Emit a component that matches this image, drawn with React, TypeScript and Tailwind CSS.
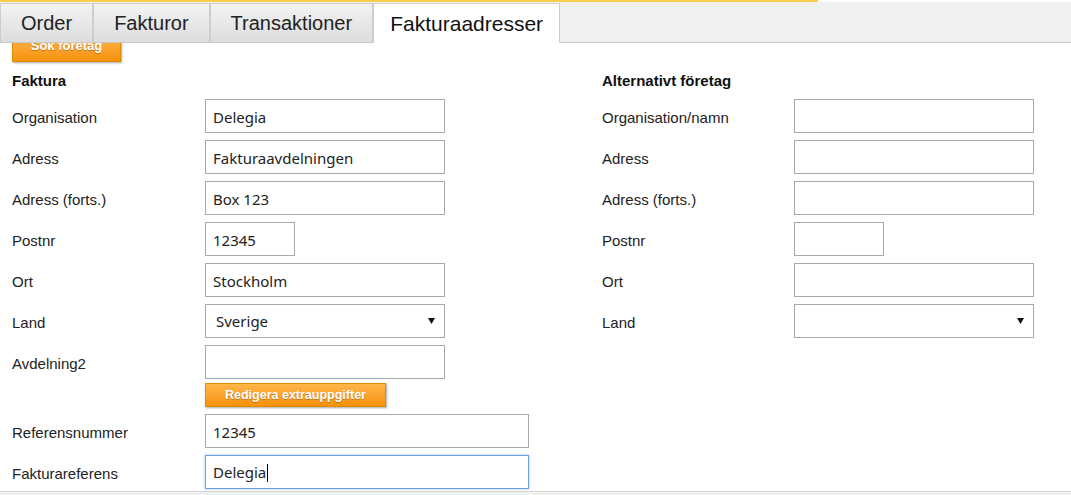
import React from "react";

const labelCls = "w-[193px] shrink-0 pt-[5px] text-[15px] text-[#222] font-['Liberation_Sans',Arial,sans-serif]";
const labelClsR = "w-[192px] shrink-0 pt-[5px] text-[15px] text-[#222] font-['Liberation_Sans',Arial,sans-serif]";
const inputBase =
  "box-border h-[34px] border border-[#a9a9a9] bg-white px-[7px] pt-[1px] text-[15px] text-[#222] outline-none font-['Noto_Sans',sans-serif]";

function Field({ label, right, children }: { label: string; right?: boolean; children: React.ReactNode }) {
  return (
    <div className="flex h-[34px] items-center">
      <div className={right ? labelClsR : labelCls}>{label}</div>
      {children}
    </div>
  );
}

function Select({ value }: { value?: string }) {
  return (
    <div className="box-border flex h-[34px] w-[240px] items-center justify-between border border-[#a9a9a9] bg-white pl-[10px] pr-[9px] pt-[1px] text-[15px] text-[#222] font-['Noto_Sans',sans-serif]">
      <span>{value ?? ""}</span>
      <svg width="7" height="6" viewBox="0 0 7 6" className="mt-[-1px]">
        <path d="M0 0H7L3.5 6Z" fill="#111" />
      </svg>
    </div>
  );
}

const orangeBtn =
  "flex items-center justify-center border border-[#e08a00] bg-gradient-to-b from-[#ffb648] to-[#f79200] font-bold text-white font-['Liberation_Sans',Arial,sans-serif] shadow-[1px_1px_2px_rgba(0,0,0,0.35)] [text-shadow:0_1px_1px_rgba(0,0,0,0.25)]";

export default function App() {
  const tabs = ["Order", "Fakturor", "Transaktioner"];
  return (
    <div className="h-[495px] w-[1071px] overflow-hidden bg-white font-['Liberation_Sans',Arial,sans-serif]">
      <div className="h-[2px] w-[818px] bg-[#f6d049]" />
      <div className="relative z-10 box-border flex h-[41px] items-end border-b border-[#c8c8c8] bg-[#f0f0f0]">
        {tabs.map((t) => (
          <div
            key={t}
            className="box-border flex h-[39px] items-center border border-b-0 border-[#cdcdcd] bg-gradient-to-b from-[#f3f3f3] to-[#dddddd] px-5 text-[20px] text-[#222]"
          >
            {t}
          </div>
        ))}
        <div className="-mb-px box-border flex h-[40px] w-[187px] items-center justify-center border border-b-0 border-[#cdcdcd] bg-white text-[21px] text-[#111]">
          Fakturaadresser
        </div>
      </div>

      <main className="px-[12px]">
        <div className={`${orangeBtn} -mt-[10px] box-border h-[29px] w-[109px] pb-[3px] text-[13px]`}>Sök företag</div>

        <div className="mt-[9px] flex">
          <section className="w-[590px] shrink-0">
            <h2 className="h-[18px] pt-[1px] text-[15px] font-bold leading-[18px] text-[#111]">Faktura</h2>
            <div className="mt-[10px] flex flex-col gap-[7px]">
              <Field label="Organisation">
                <input readOnly value="Delegia" className={`${inputBase} w-[240px]`} />
              </Field>
              <Field label="Adress">
                <input readOnly value="Fakturaavdelningen" className={`${inputBase} w-[240px]`} />
              </Field>
              <Field label="Adress (forts.)">
                <input readOnly value="Box 123" className={`${inputBase} w-[240px]`} />
              </Field>
              <Field label="Postnr">
                <input readOnly value="12345" className={`${inputBase} w-[90px]`} />
              </Field>
              <Field label="Ort">
                <input readOnly value="Stockholm" className={`${inputBase} w-[240px]`} />
              </Field>
              <Field label="Land">
                <Select value="Sverige" />
              </Field>
              <Field label="Avdelning2">
                <input readOnly value="" className={`${inputBase} w-[240px]`} />
              </Field>
            </div>
            <div className="mt-[4px] flex">
              <div className="w-[193px] shrink-0" />
              <div className={`${orangeBtn} box-border h-[24px] w-[181px] text-[12.5px]`}>Redigera extrauppgifter</div>
            </div>
            <div className="mt-[7px] flex flex-col gap-[7px]">
              <Field label="Referensnummer">
                <input readOnly value="12345" className={`${inputBase} w-[324px]`} />
              </Field>
              <Field label="Fakturareferens">
                <div className="box-border flex h-[34px] w-[324px] items-center border border-[#6ea2e4] bg-white px-[7px] pt-[1px] text-[15px] text-[#222] shadow-[0_0_2px_rgba(91,157,224,0.7)] font-['Noto_Sans',sans-serif]">
                  <span>Delegia</span>
                  <span className="ml-px inline-block h-[18px] w-px bg-black" />
                </div>
              </Field>
            </div>
          </section>

          <section className="flex-1">
            <h2 className="h-[18px] pt-[1px] text-[15px] font-bold leading-[18px] text-[#111]">Alternativt företag</h2>
            <div className="mt-[10px] flex flex-col gap-[7px]">
              <Field right label="Organisation/namn">
                <input readOnly value="" className={`${inputBase} w-[240px]`} />
              </Field>
              <Field right label="Adress">
                <input readOnly value="" className={`${inputBase} w-[240px]`} />
              </Field>
              <Field right label="Adress (forts.)">
                <input readOnly value="" className={`${inputBase} w-[240px]`} />
              </Field>
              <Field right label="Postnr">
                <input readOnly value="" className={`${inputBase} w-[90px]`} />
              </Field>
              <Field right label="Ort">
                <input readOnly value="" className={`${inputBase} w-[240px]`} />
              </Field>
              <Field right label="Land">
                <Select />
              </Field>
            </div>
          </section>
        </div>
      </main>

      <div className="mt-[2px] h-[10px] border-t border-[#d6d6d6] bg-[#f0f0f0]" />
    </div>
  );
}
